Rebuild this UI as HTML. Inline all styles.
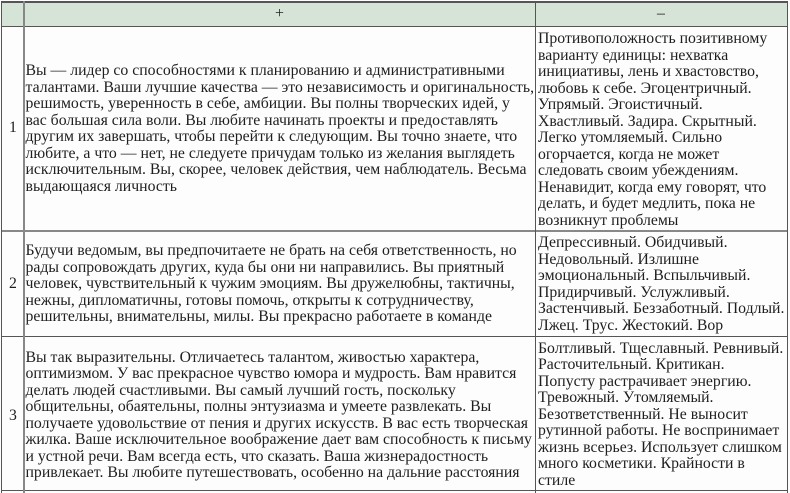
<!DOCTYPE html>
<html><head><meta charset="utf-8"><style>
html,body{margin:0;padding:0;background:#fdfdfd}
#p{position:relative;width:790px;height:493px;overflow:hidden;background:#fdfdfd;font-family:"Liberation Serif","Noto Serif CJK SC",serif;font-size:15.78px;color:#1e1e1e}
.t{position:absolute;line-height:16.5px;white-space:nowrap;filter:blur(.25px)}
.l{position:absolute;background:#555}
</style></head><body><div id="p">
<div style="position:absolute;left:1px;top:2px;width:786px;height:24px;background:#d6e3d7"></div>
<div class="l" style="left:1px;top:1px;width:787px;height:2px"></div>
<div class="l" style="left:1px;top:26px;width:787px;height:1px"></div>
<div class="l" style="left:1px;top:230px;width:787px;height:2px;background:#888"></div>
<div class="l" style="left:1px;top:336px;width:787px;height:1px"></div>
<div class="l" style="left:1px;top:490px;width:787px;height:1px"></div>
<div class="l" style="left:1px;top:1px;width:1px;height:492px"></div>
<div class="l" style="left:23px;top:1px;width:2px;height:492px;background:#888"></div>
<div class="l" style="left:535px;top:1px;width:1px;height:492px"></div>
<div class="l" style="left:787px;top:1px;width:1px;height:492px"></div>
<div class="t" style="left:275px;top:6px">+</div>
<div class="t" style="left:657px;top:6px">–</div>
<div class="t" style="left:9px;top:120px">1</div>
<div class="t" style="left:9px;top:276px">2</div>
<div class="t" style="left:9px;top:408px">3</div>
<div class="t" style="left:25.5px;top:63px">Вы — лидер со способностями к планированию и административными<br>талантами. Ваши лучшие качества — это независимость и оригинальность,<br>решимость, уверенность в себе, амбиции. Вы полны творческих идей, у<br>вас большая сила воли. Вы любите начинать проекты и предоставлять<br>другим их завершать, чтобы перейти к следующим. Вы точно знаете, что<br>любите, а что — нет, не следуете причудам только из желания выглядеть<br>исключительным. Вы, скорее, человек действия, чем наблюдатель. Весьма<br>выдающаяся личность</div>
<div class="t" style="left:25.5px;top:243px">Будучи ведомым, вы предпочитаете не брать на себя ответственность, но<br>рады сопровождать других, куда бы они ни направились. Вы приятный<br>человек, чувствительный к чужим эмоциям. Вы дружелюбны, тактичны,<br>нежны, дипломатичны, готовы помочь, открыты к сотрудничеству,<br>решительны, внимательны, милы. Вы прекрасно работаете в команде</div>
<div class="t" style="left:25.5px;top:349.5px">Вы так выразительны. Отличаетесь талантом, живостью характера,<br>оптимизмом. У вас прекрасное чувство юмора и мудрость. Вам нравится<br>делать людей счастливыми. Вы самый лучший гость, поскольку<br>общительны, обаятельны, полны энтузиазма и умеете развлекать. Вы<br>получаете удовольствие от пения и других искусств. В вас есть творческая<br>жилка. Ваше исключительное воображение дает вам способность к письму<br>и устной речи. Вам всегда есть, что сказать. Ваша жизнерадостность<br>привлекает. Вы любите путешествовать, особенно на дальние расстояния</div>
<div class="t" style="left:538px;top:31px">Противоположность позитивному<br>варианту единицы: нехватка<br>инициативы, лень и хвастовство,<br>любовь к себе. Эгоцентричный.<br>Упрямый. Эгоистичный.<br>Хвастливый. Задира. Скрытный.<br>Легко утомляемый. Сильно<br>огорчается, когда не может<br>следовать своим убеждениям.<br>Ненавидит, когда ему говорят, что<br>делать, и будет медлить, пока не<br>возникнут проблемы</div>
<div class="t" style="left:538px;top:235px">Депрессивный. Обидчивый.<br>Недовольный. Излишне<br>эмоциональный. Вспыльчивый.<br>Придирчивый. Услужливый.<br>Застенчивый. Беззаботный. Подлый.<br>Лжец. Трус. Жестокий. Вор</div>
<div class="t" style="left:538px;top:340.5px">Болтливый. Тщеславный. Ревнивый.<br>Расточительный. Критикан.<br>Попусту растрачивает энергию.<br>Тревожный. Утомляемый.<br>Безответственный. Не выносит<br>рутинной работы. Не воспринимает<br>жизнь всерьез. Использует слишком<br>много косметики. Крайности в<br>стиле</div>
</div></body></html>
